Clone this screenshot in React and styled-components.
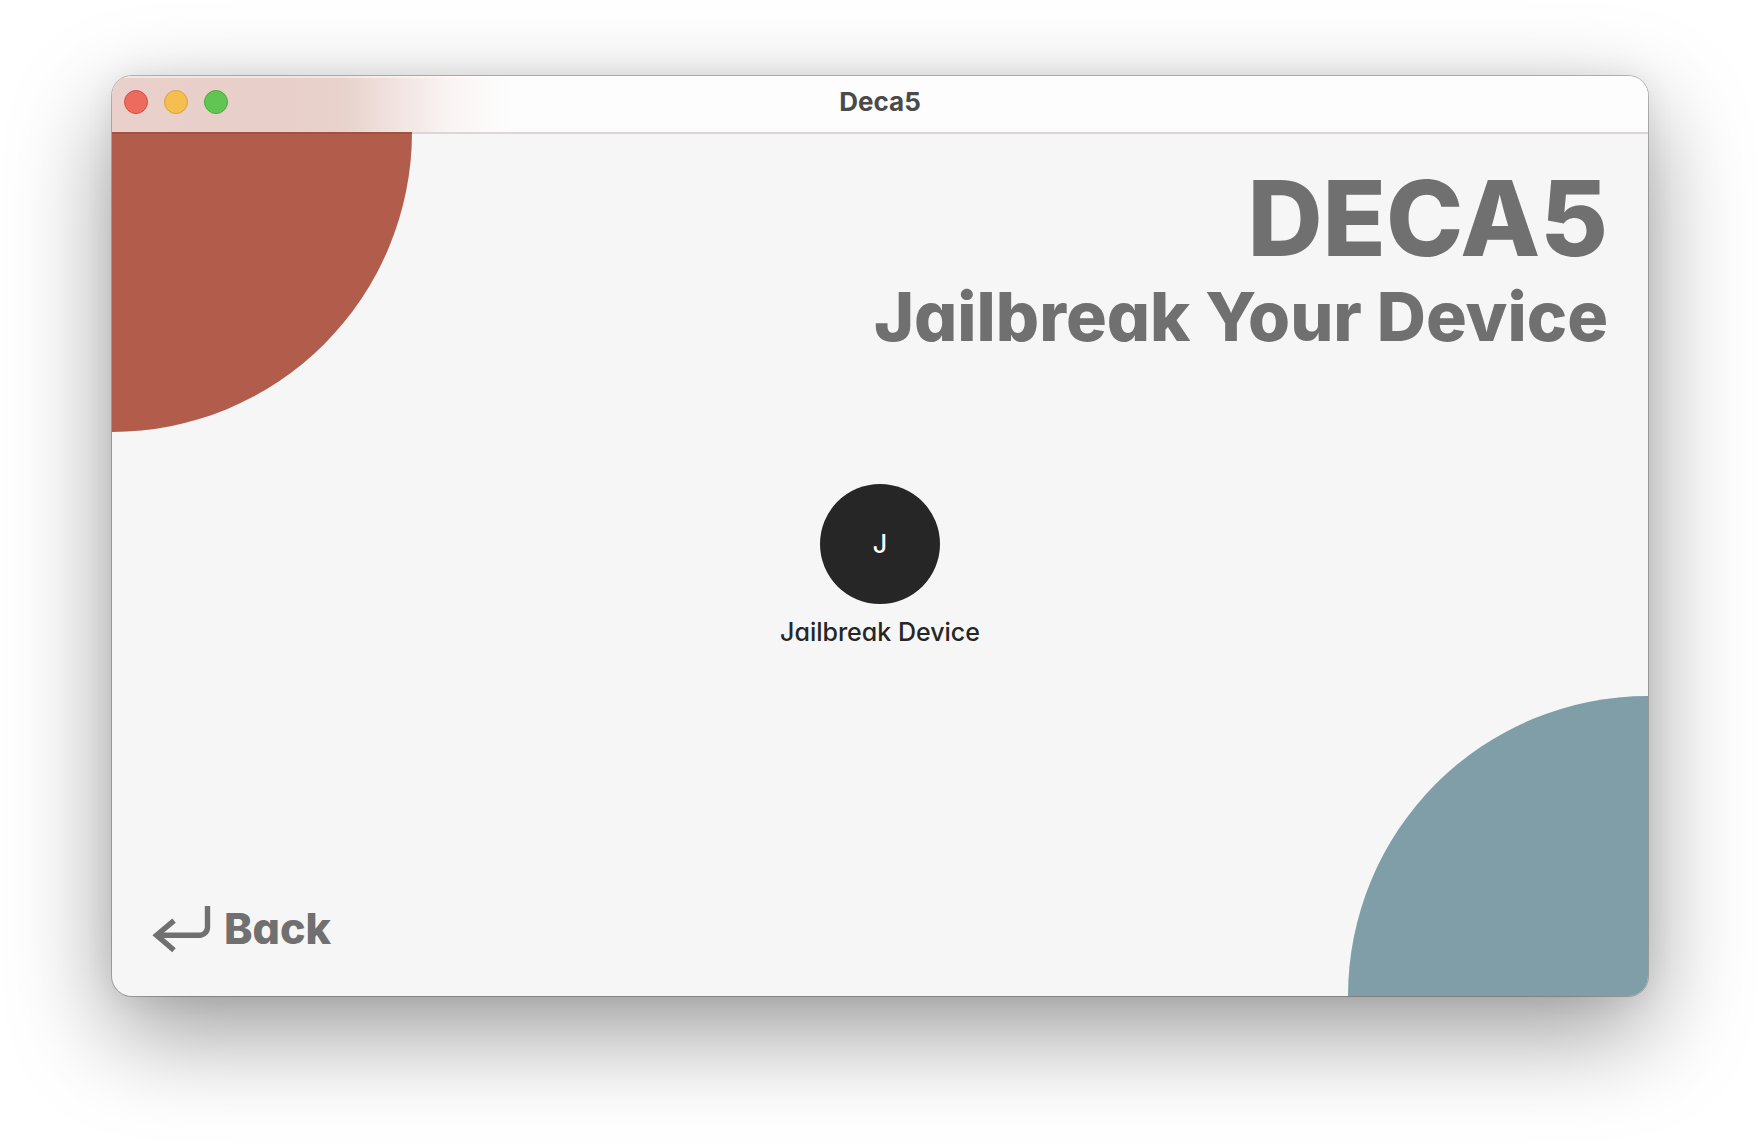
import React from "react";
import styled, { createGlobalStyle } from "styled-components";

const GlobalStyle = createGlobalStyle`
  *, *::before, *::after { box-sizing: border-box; }
  body {
    margin: 0;
    background: #ffffff;
    font-family: Inter, "Liberation Sans", sans-serif;
    -webkit-font-smoothing: antialiased;
  }
  h1, h2, p { margin: 0; }
  button { font: inherit; border: 0; background: none; padding: 0; cursor: pointer; }
`;

const Desktop = styled.div`
  display: flex;
  min-height: 100vh;
  padding: 76px 112px 148px;
`;

const Window = styled.div`
  flex: 1;
  min-width: 0;
  display: flex;
  flex-direction: column;
  border-radius: 20px;
  overflow: hidden;
  background: #f6f6f6;
  box-shadow:
    0 0 0 1px rgba(0, 0, 0, 0.24),
    0 36px 100px rgba(0, 0, 0, 0.4),
    0 0 30px rgba(0, 0, 0, 0.07);
`;

const TitleBar = styled.header`
  position: relative;
  z-index: 1;
  display: grid;
  grid-template-columns: 1fr auto 1fr;
  align-items: center;
  height: 56px;
  padding: 0 12px 4px;
  background: linear-gradient(
    90deg,
    #e9d0cb 0,
    #e9cfca 170px,
    #e8d2cb 230px,
    #f0e0dd 275px,
    #faf5f4 340px,
    #fdfdfd 400px
  );
  box-shadow: 0 2px 0 rgba(50, 0, 0, 0.13), inset 0 2px 0 rgba(255, 255, 255, 0.45);
`;

const Lights = styled.div`
  display: flex;
  gap: 16px;
`;

const Light = styled.button`
  width: 24px;
  height: 24px;
  border: 1px solid ${(p) => p.$edge};
  border-radius: 50%;
  background: ${(p) => p.$fill};
`;

const WindowTitle = styled.p`
  font-size: 26px;
  line-height: 32px;
  font-weight: 700;
  color: #4a4a4a;
`;

const Screen = styled.main`
  position: relative;
  flex: 1;
  display: grid;
  grid-template-rows: 1fr auto 1fr;
  padding: 0 40px;
  font-feature-settings: "cv11";

  button { font-feature-settings: inherit; }
`;

const Disc = styled.div`
  position: absolute;
  width: 300px;
  height: 300px;
`;

const RedDisc = styled(Disc)`
  top: 0;
  left: 0;
  border-radius: 0 0 100% 0;
  background: #b25d4c;
`;

const TealDisc = styled(Disc)`
  right: 0;
  bottom: 0;
  border-radius: 100% 0 0 0;
  background: #7f9ea7;
`;

const Heading = styled.div`
  position: relative;
  padding-top: 32px;
  text-align: right;
  color: #707070;
`;

const AppName = styled.h1`
  font-size: 104px;
  line-height: 108px;
  font-weight: 800;
`;

const PageTitle = styled.h2`
  font-size: 68px;
  line-height: 88px;
  font-weight: 800;
`;

const Action = styled.button`
  position: relative;
  justify-self: center;
  display: flex;
  flex-direction: column;
  align-items: center;
  gap: 16px;
  color: #262626;
  font-size: 25px;
  line-height: 24px;
  font-weight: 500;
`;

const Avatar = styled.span`
  display: grid;
  place-items: center;
  width: 120px;
  height: 120px;
  border-radius: 50%;
  background: #262626;
  color: #ffffff;
`;

const BackButton = styled.button`
  position: relative;
  align-self: end;
  justify-self: start;
  display: flex;
  align-items: flex-end;
  gap: 12px;
  margin-bottom: 42px;
  color: #707070;
  font-size: 43px;
  line-height: 52px;
  font-weight: 800;
`;

const ReturnIcon = () => (
  <svg width="60" height="48" viewBox="0 0 60 48" fill="none" stroke="currentColor" strokeWidth="5.4" aria-hidden="true">
    <path d="M55.5 0v21.3a8 8 0 0 1-8 8H4" />
    <path d="M22 14.6 4.6 29.3l17.4 15" />
  </svg>
);

export default function App() {
  return (
    <>
      <GlobalStyle />
      <Desktop>
        <Window>
          <TitleBar>
            <Lights>
              <Light $fill="#ed6a5e" $edge="#d05147" aria-label="Close" />
              <Light $fill="#f5bf4f" $edge="#d6a243" aria-label="Minimize" />
              <Light $fill="#61c554" $edge="#51a73e" aria-label="Zoom" />
            </Lights>
            <WindowTitle>Deca5</WindowTitle>
          </TitleBar>
          <Screen>
            <RedDisc />
            <TealDisc />
            <Heading>
              <AppName>DECA5</AppName>
              <PageTitle>Jailbreak Your Device</PageTitle>
            </Heading>
            <Action>
              <Avatar>J</Avatar>
              Jailbreak Device
            </Action>
            <BackButton>
              <ReturnIcon />
              Back
            </BackButton>
          </Screen>
        </Window>
      </Desktop>
    </>
  );
}
